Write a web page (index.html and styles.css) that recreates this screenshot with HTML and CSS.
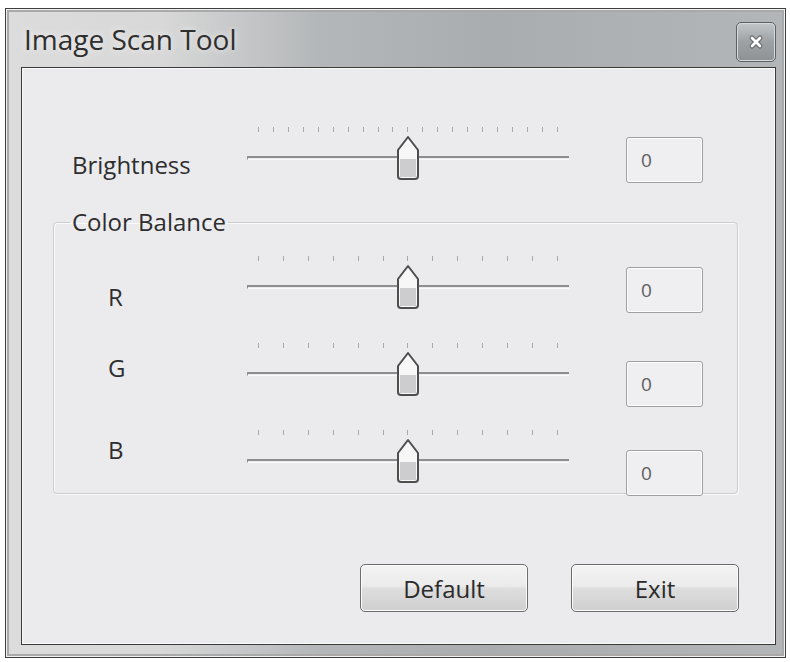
FILE: index.html
```html
<!DOCTYPE html>
<html>

<head>
    <title>Image Scan Tool</title>
    <meta charset="utf-8">
    <meta name="viewport" content="width=device-width, initial-scale=1.0">
    <link rel="stylesheet" href="styles.css">
</head>

<body>
    <div class="vindue">
        <div class="titellinje">
            <h1>Image Scan Tool</h1>
            <button class="luk" title="Luk">
                <svg width="18" height="18" viewBox="0 0 18 18">
                    <path d="M5 5 L13 13 M13 5 L5 13" stroke="#686b6e" stroke-width="5" stroke-linecap="round" />
                    <path d="M5 5 L13 13 M13 5 L5 13" stroke="#fff" stroke-width="2.6" stroke-linecap="round" />
                </svg>
            </button>
        </div>

        <div class="indhold">
            <!-- lysstyrke -->
            <div class="raekke lys">
                <span class="etiket">Brightness</span>
                <div class="skyder">
                    <div class="streger">
                        <i></i><i></i><i></i><i></i><i></i><i></i><i></i><i></i><i></i><i></i><i></i>
                        <i></i><i></i><i></i><i></i><i></i><i></i><i></i><i></i><i></i><i></i>
                    </div>
                    <div class="spor"></div>
                    <svg class="knap" width="26" height="46" viewBox="0 0 26 46">
                        <path d="M3 15 L13 2 L23 15 V41 Q23 44 20 44 H6 Q3 44 3 41 Z" fill="#f7f7f7" />
                        <rect x="5" y="24" width="16" height="18" fill="#cdcdcf" />
                        <path d="M3 15 L13 2 L23 15 V41 Q23 44 20 44 H6 Q3 44 3 41 Z" fill="none" stroke="#4e4e4e" stroke-width="2" stroke-linejoin="round" />
                    </svg>
                </div>
                <div class="vaerdi">0</div>
            </div>

            <fieldset class="farver">
                <legend>Color Balance</legend>

                <div class="raekke r">
                    <span class="etiket">R</span>
                    <div class="skyder">
                        <div class="streger">
                            <i></i><i></i><i></i><i></i><i></i><i></i><i></i><i></i><i></i><i></i><i></i><i></i><i></i>
                        </div>
                        <div class="spor"></div>
                        <svg class="knap" width="26" height="46" viewBox="0 0 26 46">
                            <path d="M3 15 L13 2 L23 15 V41 Q23 44 20 44 H6 Q3 44 3 41 Z" fill="#f7f7f7" />
                            <rect x="5" y="24" width="16" height="18" fill="#cdcdcf" />
                            <path d="M3 15 L13 2 L23 15 V41 Q23 44 20 44 H6 Q3 44 3 41 Z" fill="none" stroke="#4e4e4e" stroke-width="2" stroke-linejoin="round" />
                        </svg>
                    </div>
                    <div class="vaerdi">0</div>
                </div>

                <div class="raekke g">
                    <span class="etiket">G</span>
                    <div class="skyder">
                        <div class="streger">
                            <i></i><i></i><i></i><i></i><i></i><i></i><i></i><i></i><i></i><i></i><i></i><i></i><i></i>
                        </div>
                        <div class="spor"></div>
                        <svg class="knap" width="26" height="46" viewBox="0 0 26 46">
                            <path d="M3 15 L13 2 L23 15 V41 Q23 44 20 44 H6 Q3 44 3 41 Z" fill="#f7f7f7" />
                            <rect x="5" y="24" width="16" height="18" fill="#cdcdcf" />
                            <path d="M3 15 L13 2 L23 15 V41 Q23 44 20 44 H6 Q3 44 3 41 Z" fill="none" stroke="#4e4e4e" stroke-width="2" stroke-linejoin="round" />
                        </svg>
                    </div>
                    <div class="vaerdi">0</div>
                </div>

                <div class="raekke b">
                    <span class="etiket">B</span>
                    <div class="skyder">
                        <div class="streger">
                            <i></i><i></i><i></i><i></i><i></i><i></i><i></i><i></i><i></i><i></i><i></i><i></i><i></i>
                        </div>
                        <div class="spor"></div>
                        <svg class="knap" width="26" height="46" viewBox="0 0 26 46">
                            <path d="M3 15 L13 2 L23 15 V41 Q23 44 20 44 H6 Q3 44 3 41 Z" fill="#f7f7f7" />
                            <rect x="5" y="24" width="16" height="18" fill="#cdcdcf" />
                            <path d="M3 15 L13 2 L23 15 V41 Q23 44 20 44 H6 Q3 44 3 41 Z" fill="none" stroke="#4e4e4e" stroke-width="2" stroke-linejoin="round" />
                        </svg>
                    </div>
                    <div class="vaerdi">0</div>
                </div>
            </fieldset>

            <div class="knapper">
                <button class="trykknap">Default</button>
                <button class="trykknap">Exit</button>
            </div>
        </div>
    </div>
</body>

</html>
```

FILE: styles.css
```css
body {
    margin: 0;
    padding: 8px 0 0 5px;
    background: white;
    font-family: "Open Sans", "DejaVu Sans", sans-serif;
    color: #2c2c2c;
}

/* vinduet med ramme og titellinje */
.vindue {
    box-sizing: border-box;
    width: 781px;
    height: 650px;
    display: flex;
    flex-direction: column;
    padding: 0 9px 12px 15px;
    border: 1px solid #3f3f3f;
    background: linear-gradient(to right, #dcdcdc 0%, #d8d8d8 20%, #b4b7b9 40%, #aaadaf 62%, #b3b6b8 100%);
    box-shadow: inset 0 0 0 1px #f2f2f2, inset 0 0 0 3px #a9a9a9;
}

.titellinje {
    height: 58px;
    display: flex;
    justify-content: space-between;
    align-items: flex-start;
}

.titellinje h1 {
    margin: 11px 0 0 3px;
    font-size: 28px;
    line-height: 38px;
    font-weight: normal;
    color: #2f2f2f;
    text-shadow: 0 0 6px #f4f4f4;
}

.luk {
    width: 40px;
    height: 40px;
    margin-top: 13px;
    padding: 0;
    display: flex;
    align-items: center;
    justify-content: center;
    border: 1px solid #5d6062;
    border-radius: 5px;
    background: linear-gradient(#c3c6c8, #9ea1a3 50%, #8f9294);
    box-shadow: inset 0 0 0 1px #d7d9da;
}

/* selve dialogens flade */
.indhold {
    flex: 1;
    border: 1px solid #3a3a3a;
    background: #ebebee;
    box-shadow: inset 0 0 0 1px #fafafa;
}

.raekke {
    display: grid;
    grid-template-columns: 82px 322px 77px;
    column-gap: 57px;
    align-items: start;
    height: 55px;
}

.etiket {
    font-size: 24px;
    line-height: 32px;
    color: #2e2e2e;
}

.lys {
    grid-template-columns: 118px 322px 77px;
    margin: 59px 0 0 50px;
}

.lys .etiket { margin-top: 22px; }
.lys .vaerdi { margin-top: 10px; }
.r .etiket { margin-top: 25px; }
.r .vaerdi { margin-top: 11px; }
.g .etiket { margin-top: 9px; }
.g .vaerdi { margin-top: 18px; }
.b .etiket { margin-top: 4px; }
.b .vaerdi { margin-top: 20px; }

/* skydere */
.skyder {
    position: relative;
    height: 55px;
}

.streger {
    display: flex;
    justify-content: space-between;
    padding: 0 11px;
    height: 5px;
}

.streger i {
    width: 1px;
    height: 5px;
    background: #a9a9ab;
}

.spor {
    height: 1px;
    margin-top: 24px;
    border-top: 2px solid #8e8e90;
    border-left: 1px solid #8e8e90;
    border-bottom: 1px solid #fbfbfb;
}

.knap {
    position: absolute;
    left: calc(50% - 13px);
    top: 8px;
}

.vaerdi {
    box-sizing: border-box;
    width: 77px;
    height: 46px;
    padding-left: 14px;
    border: 1px solid #9f9fa1;
    border-radius: 3px;
    background: #efeff1;
    box-shadow: inset 0 0 0 1px #fdfdfd;
    font-size: 19px;
    line-height: 44px;
    color: #5e5e5e;
}

/* gruppeboks */
.farver {
    width: 685px;
    box-sizing: border-box;
    margin: 24px 0 0 31px;
    padding: 18px 0 8px 0;
    border: 1px solid #cdcdd1;
    border-radius: 4px;
    box-shadow: inset 1px 1px 0 #fafafa, 1px 1px 0 #fafafa;
    display: flex;
    flex-direction: column;
    gap: 32px;
}

.farver .raekke {
    margin-left: 54px;
}

.farver legend {
    margin-left: 16px;
    padding: 0 2px;
    font-size: 24px;
    line-height: 32px;
    color: #2e2e2e;
}

.knapper {
    display: flex;
    justify-content: flex-end;
    gap: 43px;
    margin-top: 70px;
    padding-right: 36px;
}

.trykknap {
    width: 168px;
    height: 48px;
    padding: 0;
    border: 1px solid #6c6c6c;
    border-radius: 5px;
    background: linear-gradient(#f3f3f3, #ebebeb 45%, #dddddd 52%, #cfcfcf);
    box-shadow: inset 0 0 0 1px #fbfbfb;
    font-family: "Open Sans", "DejaVu Sans", sans-serif;
    font-size: 24px;
    color: #2a2a2a;
}
```
